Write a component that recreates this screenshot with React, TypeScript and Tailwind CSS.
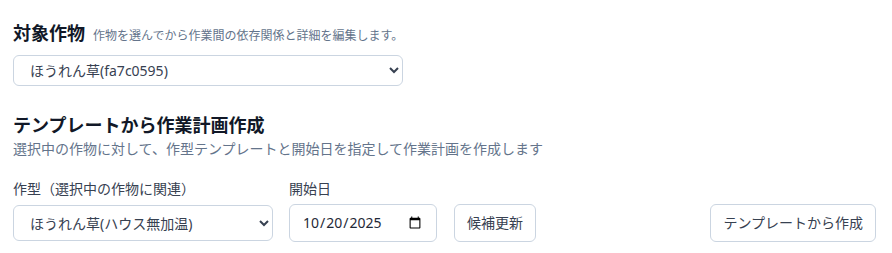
import React from "react";

export default function App() {
  const font = { fontFamily: '"Noto Sans", "Noto Sans CJK JP", sans-serif' };
  return (
    <div className="bg-white pt-[19px] pl-[13px] pr-4 pb-2" style={font}>
      <section>
        <div className="flex items-baseline gap-2">
          <h2 className="text-[18px] leading-7 font-bold text-[#111827]">対象作物</h2>
          <span className="text-xs text-[#64748b]">作物を選んでから作業間の依存関係と詳細を編集します。</span>
        </div>
        <select
          className="mt-2 w-[390px] h-[31px] rounded-md border border-[#cbd5e1] bg-white px-3 text-sm text-[#374151]"
          defaultValue="a"
        >
          <option value="a">ほうれん草(fa7c0595)</option>
        </select>
      </section>
      <section className="mt-[25px]">
        <h2 className="text-[18px] leading-7 font-bold text-[#111827]">テンプレートから作業計画作成</h2>
        <p className="text-sm leading-5 text-[#64748b]">
          選択中の作物に対して、作型テンプレートと開始日を指定して作業計画を作成します
        </p>
        <div className="mt-5 flex items-end gap-4">
          <div className="flex flex-col">
            <label className="text-sm leading-5 mb-[5px] text-[#374151]">作型（選択中の作物に関連）</label>
            <select
              className="my-px w-[260px] h-[36px] rounded-md border border-[#cbd5e1] bg-white px-3 text-sm text-[#374151]"
              defaultValue="a"
            >
              <option value="a">ほうれん草(ハウス無加温)</option>
            </select>
          </div>
          <div className="flex flex-col">
            <label className="text-sm leading-5 mb-[5px] text-[#374151]">開始日</label>
            <input
              type="date"
              defaultValue="2025-10-20"
              className="w-[148px] h-[38px] rounded-md border border-[#cbd5e1] bg-white px-3 text-sm text-[#1f2937]"
            />
          </div>
          <button className="ml-px h-[38px] rounded-md border border-[#cbd5e1] bg-white px-3 text-sm text-[#374151]">
            候補更新
          </button>
          <button className="ml-auto h-[38px] rounded-md border border-[#cbd5e1] bg-white px-3 text-sm text-[#374151]">
            テンプレートから作成
          </button>
        </div>
      </section>
    </div>
  );
}
